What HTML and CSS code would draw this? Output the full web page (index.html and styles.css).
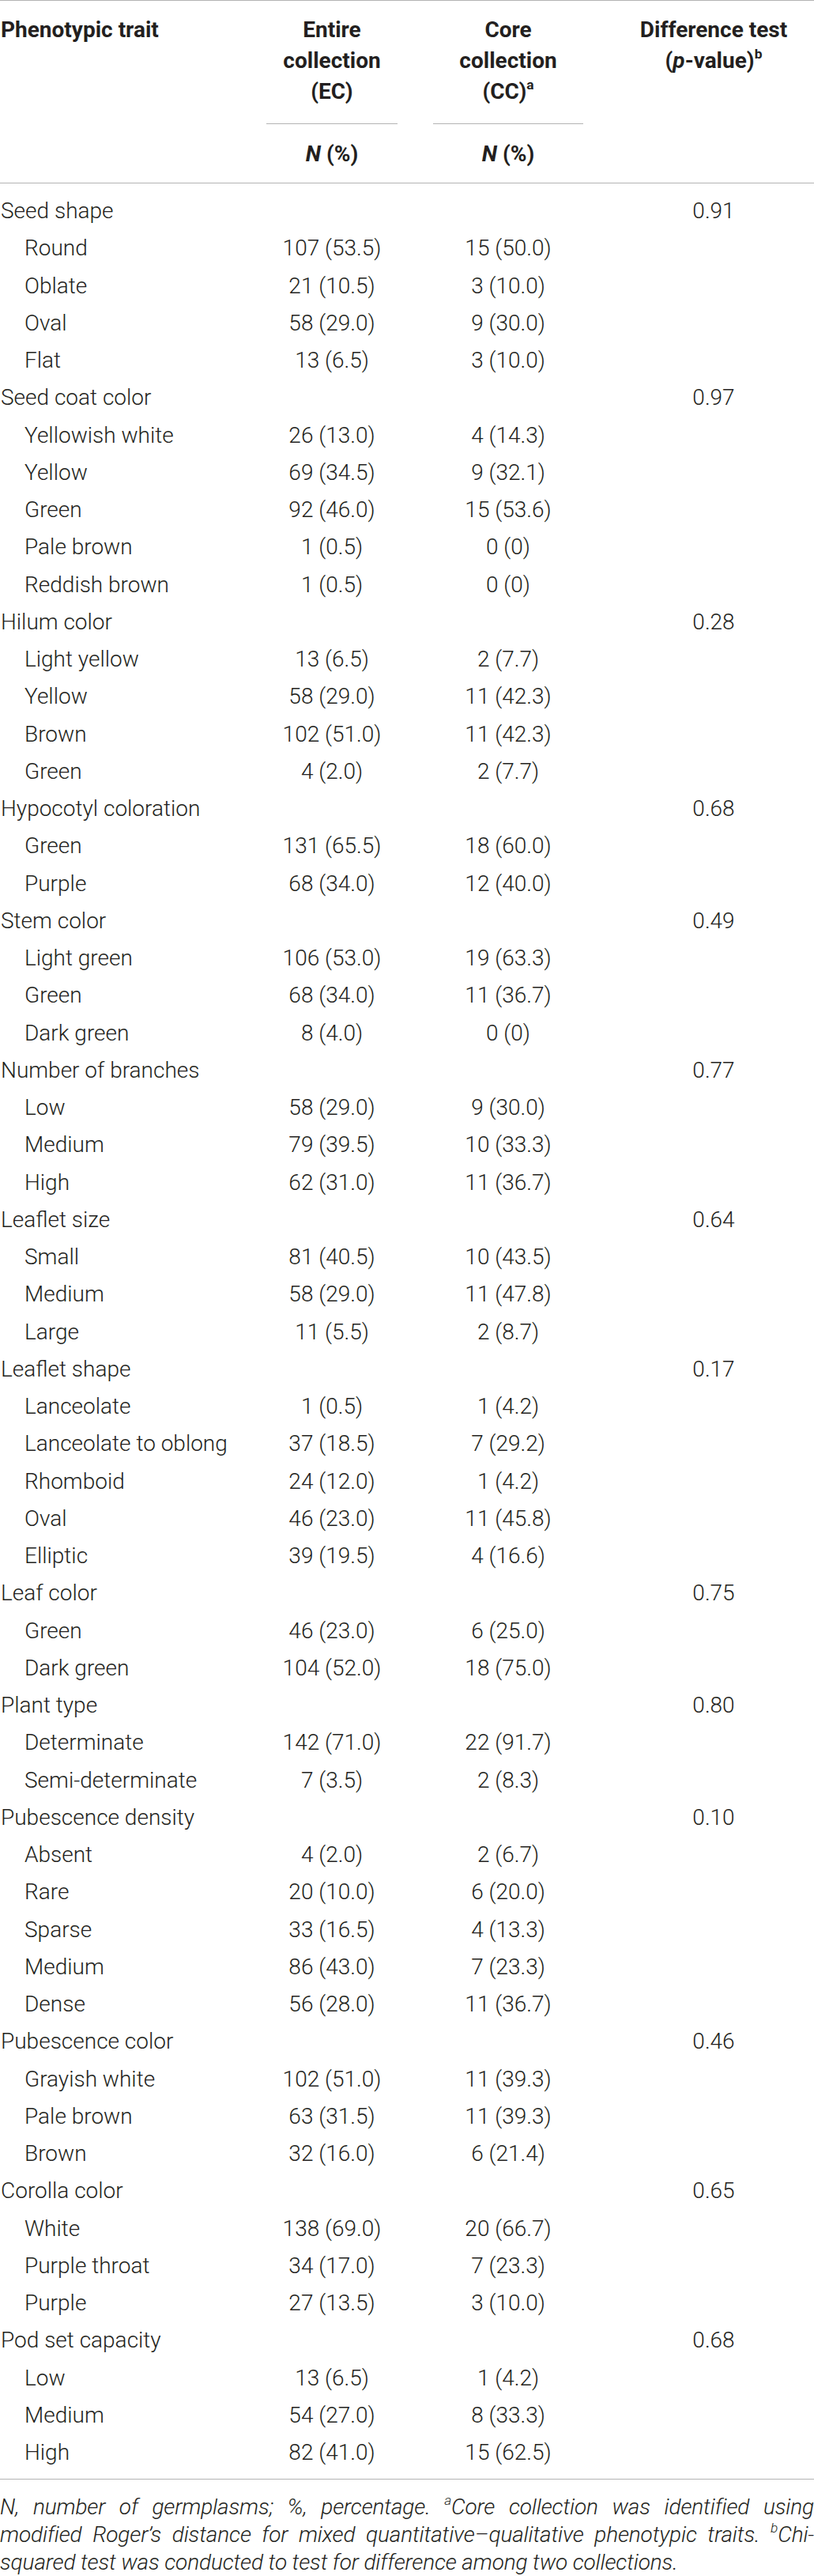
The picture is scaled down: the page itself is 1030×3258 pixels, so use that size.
FILE: index.html
```html
<!DOCTYPE html>
<html lang="en">
<head>
    <meta charset="UTF-8">
    <meta name="viewport" content="width=device-width, initial-scale=1.0">
    <title>Phenotypic traits</title>
    <link rel="stylesheet" href="styles.css">
</head>
<body>
    <table class="traits">
        <colgroup>
            <col class="c-trait">
            <col class="c-ec">
            <col class="c-cc">
            <col class="c-test">
        </colgroup>
        <thead>
            <tr>
                <th class="h-trait">Phenotypic trait</th>
                <th class="h-ec">
                    <div>Entire<br>collection<br>(EC)</div>
                    <div class="rule"></div>
                    <div><i>N</i> (%)</div>
                </th>
                <th class="h-cc">
                    <div>Core<br>collection<br>(CC)<sup>a</sup></div>
                    <div class="rule"></div>
                    <div><i>N</i> (%)</div>
                </th>
                <th class="h-test">Difference test<br>(<i>p</i>-value)<sup>b</sup></th>
            </tr>
        </thead>
        <tbody>
            <tr class="group"><td>Seed shape</td><td></td><td></td><td>0.91</td></tr>
            <tr><td class="sub">Round</td><td>107 (53.5)</td><td>15 (50.0)</td><td></td></tr>
            <tr><td class="sub">Oblate</td><td>21 (10.5)</td><td>3 (10.0)</td><td></td></tr>
            <tr><td class="sub">Oval</td><td>58 (29.0)</td><td>9 (30.0)</td><td></td></tr>
            <tr><td class="sub">Flat</td><td>13 (6.5)</td><td>3 (10.0)</td><td></td></tr>

            <tr class="group"><td>Seed coat color</td><td></td><td></td><td>0.97</td></tr>
            <tr><td class="sub">Yellowish white</td><td>26 (13.0)</td><td>4 (14.3)</td><td></td></tr>
            <tr><td class="sub">Yellow</td><td>69 (34.5)</td><td>9 (32.1)</td><td></td></tr>
            <tr><td class="sub">Green</td><td>92 (46.0)</td><td>15 (53.6)</td><td></td></tr>
            <tr><td class="sub">Pale brown</td><td>1 (0.5)</td><td>0 (0)</td><td></td></tr>
            <tr><td class="sub">Reddish brown</td><td>1 (0.5)</td><td>0 (0)</td><td></td></tr>

            <tr class="group"><td>Hilum color</td><td></td><td></td><td>0.28</td></tr>
            <tr><td class="sub">Light yellow</td><td>13 (6.5)</td><td>2 (7.7)</td><td></td></tr>
            <tr><td class="sub">Yellow</td><td>58 (29.0)</td><td>11 (42.3)</td><td></td></tr>
            <tr><td class="sub">Brown</td><td>102 (51.0)</td><td>11 (42.3)</td><td></td></tr>
            <tr><td class="sub">Green</td><td>4 (2.0)</td><td>2 (7.7)</td><td></td></tr>

            <tr class="group"><td>Hypocotyl coloration</td><td></td><td></td><td>0.68</td></tr>
            <tr><td class="sub">Green</td><td>131 (65.5)</td><td>18 (60.0)</td><td></td></tr>
            <tr><td class="sub">Purple</td><td>68 (34.0)</td><td>12 (40.0)</td><td></td></tr>

            <tr class="group"><td>Stem color</td><td></td><td></td><td>0.49</td></tr>
            <tr><td class="sub">Light green</td><td>106 (53.0)</td><td>19 (63.3)</td><td></td></tr>
            <tr><td class="sub">Green</td><td>68 (34.0)</td><td>11 (36.7)</td><td></td></tr>
            <tr><td class="sub">Dark green</td><td>8 (4.0)</td><td>0 (0)</td><td></td></tr>

            <tr class="group"><td>Number of branches</td><td></td><td></td><td>0.77</td></tr>
            <tr><td class="sub">Low</td><td>58 (29.0)</td><td>9 (30.0)</td><td></td></tr>
            <tr><td class="sub">Medium</td><td>79 (39.5)</td><td>10 (33.3)</td><td></td></tr>
            <tr><td class="sub">High</td><td>62 (31.0)</td><td>11 (36.7)</td><td></td></tr>

            <tr class="group"><td>Leaflet size</td><td></td><td></td><td>0.64</td></tr>
            <tr><td class="sub">Small</td><td>81 (40.5)</td><td>10 (43.5)</td><td></td></tr>
            <tr><td class="sub">Medium</td><td>58 (29.0)</td><td>11 (47.8)</td><td></td></tr>
            <tr><td class="sub">Large</td><td>11 (5.5)</td><td>2 (8.7)</td><td></td></tr>

            <tr class="group"><td>Leaflet shape</td><td></td><td></td><td>0.17</td></tr>
            <tr><td class="sub">Lanceolate</td><td>1 (0.5)</td><td>1 (4.2)</td><td></td></tr>
            <tr><td class="sub">Lanceolate to oblong</td><td>37 (18.5)</td><td>7 (29.2)</td><td></td></tr>
            <tr><td class="sub">Rhomboid</td><td>24 (12.0)</td><td>1 (4.2)</td><td></td></tr>
            <tr><td class="sub">Oval</td><td>46 (23.0)</td><td>11 (45.8)</td><td></td></tr>
            <tr><td class="sub">Elliptic</td><td>39 (19.5)</td><td>4 (16.6)</td><td></td></tr>

            <tr class="group"><td>Leaf color</td><td></td><td></td><td>0.75</td></tr>
            <tr><td class="sub">Green</td><td>46 (23.0)</td><td>6 (25.0)</td><td></td></tr>
            <tr><td class="sub">Dark green</td><td>104 (52.0)</td><td>18 (75.0)</td><td></td></tr>

            <tr class="group"><td>Plant type</td><td></td><td></td><td>0.80</td></tr>
            <tr><td class="sub">Determinate</td><td>142 (71.0)</td><td>22 (91.7)</td><td></td></tr>
            <tr><td class="sub">Semi-determinate</td><td>7 (3.5)</td><td>2 (8.3)</td><td></td></tr>

            <tr class="group"><td>Pubescence density</td><td></td><td></td><td>0.10</td></tr>
            <tr><td class="sub">Absent</td><td>4 (2.0)</td><td>2 (6.7)</td><td></td></tr>
            <tr><td class="sub">Rare</td><td>20 (10.0)</td><td>6 (20.0)</td><td></td></tr>
            <tr><td class="sub">Sparse</td><td>33 (16.5)</td><td>4 (13.3)</td><td></td></tr>
            <tr><td class="sub">Medium</td><td>86 (43.0)</td><td>7 (23.3)</td><td></td></tr>
            <tr><td class="sub">Dense</td><td>56 (28.0)</td><td>11 (36.7)</td><td></td></tr>

            <tr class="group"><td>Pubescence color</td><td></td><td></td><td>0.46</td></tr>
            <tr><td class="sub">Grayish white</td><td>102 (51.0)</td><td>11 (39.3)</td><td></td></tr>
            <tr><td class="sub">Pale brown</td><td>63 (31.5)</td><td>11 (39.3)</td><td></td></tr>
            <tr><td class="sub">Brown</td><td>32 (16.0)</td><td>6 (21.4)</td><td></td></tr>

            <tr class="group"><td>Corolla color</td><td></td><td></td><td>0.65</td></tr>
            <tr><td class="sub">White</td><td>138 (69.0)</td><td>20 (66.7)</td><td></td></tr>
            <tr><td class="sub">Purple throat</td><td>34 (17.0)</td><td>7 (23.3)</td><td></td></tr>
            <tr><td class="sub">Purple</td><td>27 (13.5)</td><td>3 (10.0)</td><td></td></tr>

            <tr class="group"><td>Pod set capacity</td><td></td><td></td><td>0.68</td></tr>
            <tr><td class="sub">Low</td><td>13 (6.5)</td><td>1 (4.2)</td><td></td></tr>
            <tr><td class="sub">Medium</td><td>54 (27.0)</td><td>8 (33.3)</td><td></td></tr>
            <tr><td class="sub">High</td><td>82 (41.0)</td><td>15 (62.5)</td><td></td></tr>
        </tbody>
    </table>

    <div class="notes">
        <span class="line"><i>N</i>, number of germplasms; %, percentage. <sup>a</sup>Core collection was identified using</span>
        <span class="line">modified Roger’s distance for mixed quantitative–qualitative phenotypic traits. <sup>b</sup>Chi-</span>
        <span class="line last">squared test was conducted to test for difference among two collections.</span>
    </div>
</body>
</html>
```

FILE: styles.css
```css
body {
    margin: 0;
    background-color: #fff;
    color: #231f20;
    font-family: Roboto, "Liberation Sans", Arial, sans-serif;
}

.traits {
    width: 1030px;
    table-layout: fixed;
    border-collapse: separate;
    border-spacing: 0;
    border-top: 1px solid #b3b3b3;
    font-size: 28px;
}

.c-trait { width: 317px; }
.c-ec { width: 206px; }
.c-cc { width: 240px; }
.c-test { width: 267px; }

/* encabezado */
.traits th {
    font-weight: 700;
    line-height: 39px;
    vertical-align: top;
    padding: 17px 0;
    border-bottom: 1px solid #b3b3b3;
    text-align: center;
}

.traits th.h-trait {
    text-align: left;
    padding-left: 1px;
}

.traits th.h-test {
    padding-left: 16px;
    padding-right: 3px;
}

.traits th i {
    font-style: italic;
}

.rule {
    height: 1px;
    background-color: #b3b3b3;
    margin: 21px 20px 18px;
}

.h-cc .rule {
    margin-left: 25px;
    margin-right: 25px;
}

sup {
    font-size: 62%;
    line-height: 0;
    vertical-align: 0.72em;
}

/* filas */
.traits td {
    font-weight: 300;
    line-height: 47.25px;
    padding: 0;
    text-align: center;
    white-space: nowrap;
}

.traits td:first-child {
    text-align: left;
    padding-left: 1px;
}

.traits td.sub {
    padding-left: 31px;
}

.traits td:last-child {
    padding-left: 16px;
    padding-right: 3px;
}

.traits tbody tr:first-child td {
    padding-top: 11px;
}

.traits tbody tr:last-child td {
    padding-bottom: 10px;
    border-bottom: 1px solid #b3b3b3;
}

/* notas al pie */
.notes {
    width: 1030px;
    margin-top: 17px;
    font-size: 28px;
    font-weight: 300;
    font-style: italic;
    line-height: 35px;
    letter-spacing: -0.15px;
}

.notes .line {
    display: block;
    text-align: justify;
    text-align-last: justify;
    white-space: nowrap;
}

.notes .line.last {
    text-align-last: left;
}
```
